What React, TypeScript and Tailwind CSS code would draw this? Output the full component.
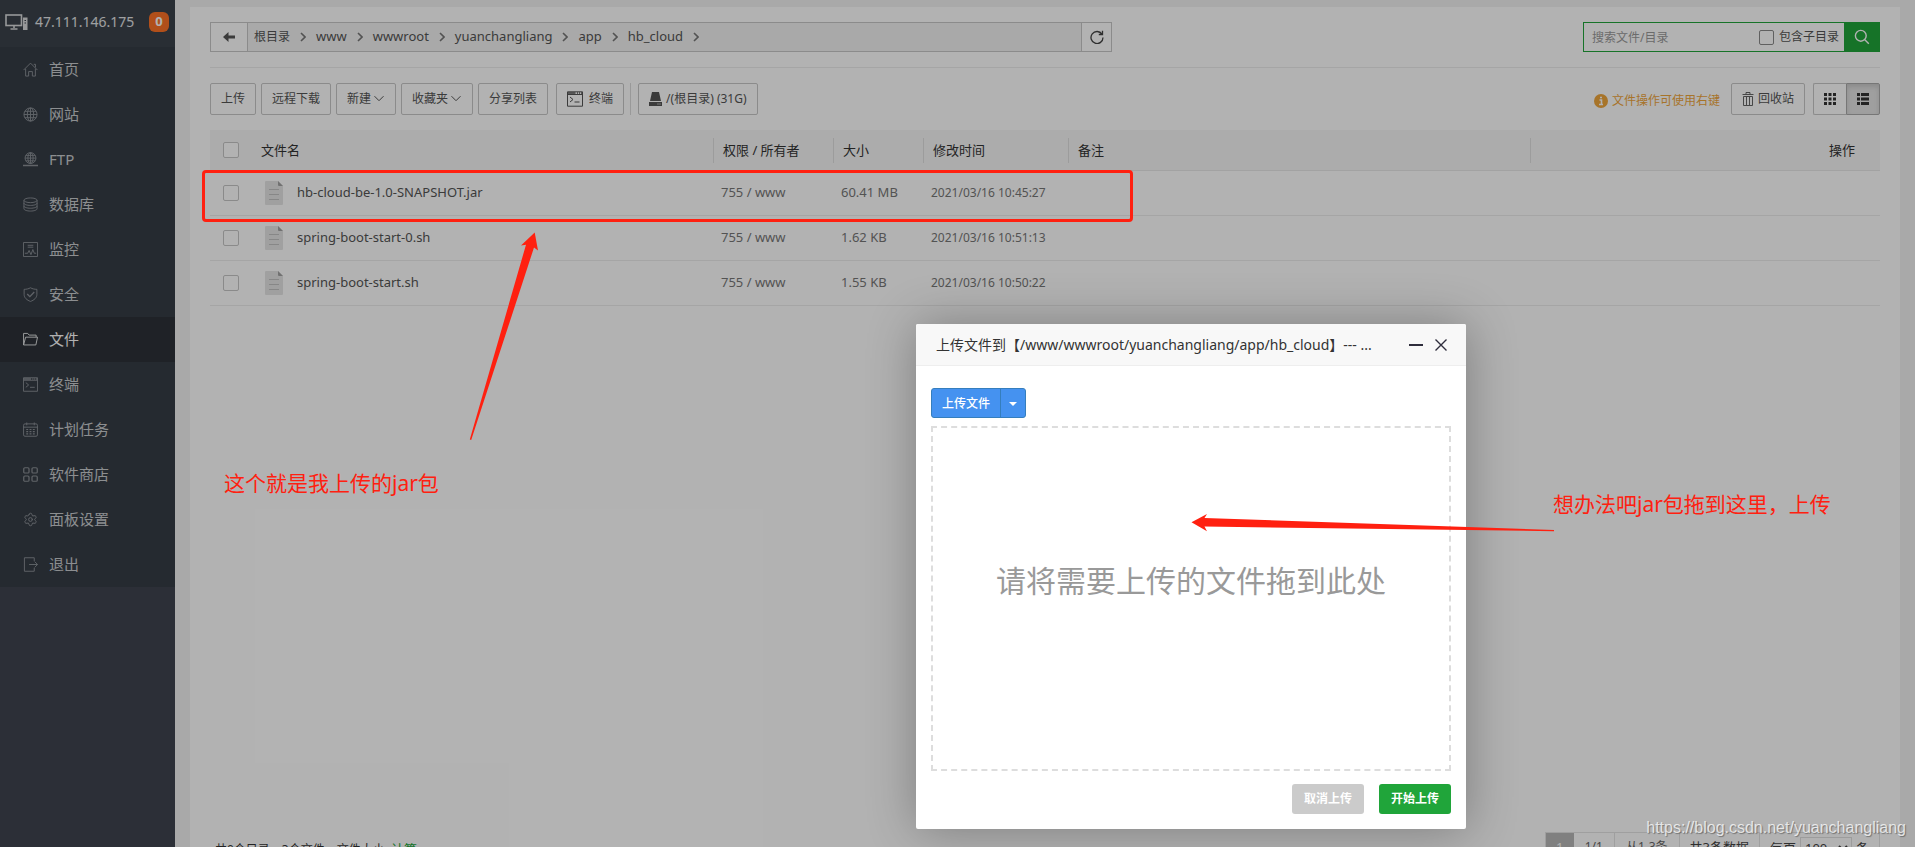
import React from 'react';
import { Settings } from 'lucide-react';

type IconProps = { className?: string };

const svgBase = {
  viewBox: '0 0 16 16',
  fill: 'none',
  stroke: 'currentColor',
  strokeWidth: 1,
  'aria-hidden': true,
} as const;

const HomeIcon = ({ className }: IconProps) => (
  <svg {...svgBase} className={className}>
    <path d="M.6 8.6 8 1.2l7.400 7.400M11.500 2.500h1.800v3.300M2.800 7.200v7.800h3.200v-4.800h4v4.800h3.200V7.200" />
  </svg>
);
const GlobeIcon = ({ className }: IconProps) => (
  <svg {...svgBase} className={className}>
    <circle cx="8" cy="8" r="7" />
    <ellipse cx="8" cy="8" rx="3.400" ry="7" />
    <path d="M8 1v14M1 8h14M2 4.600h12M2 11.400h12" />
  </svg>
);
const FtpIcon = ({ className }: IconProps) => (
  <svg {...svgBase} className={className}>
    <circle cx="8" cy="6.500" r="5.800" />
    <ellipse cx="8" cy="6.500" rx="2.800" ry="5.800" />
    <path d="M8 .7v12M2.200 6.500h11.600M3 3.600h10M3 9.400h10" />
    <path d="M0 14.300h16M6 14.300h4" strokeWidth="1.600" />
  </svg>
);
const DatabaseIcon = ({ className }: IconProps) => (
  <svg {...svgBase} className={className}>
    <ellipse cx="8" cy="3.500" rx="7" ry="2.500" />
    <path d="M1 3.500v9c0 1.400 3.100 2.500 7 2.500s7-1.100 7-2.500v-9M1 6.500C1 7.900 4.100 9 8 9s7-1.100 7-2.500M1 9.500C1 10.900 4.100 12 8 12s7-1.100 7-2.500" />
  </svg>
);
const MonitorIcon = ({ className }: IconProps) => (
  <svg {...svgBase} className={className}>
    <path d="M.5.5h15v15H.5zM5 3.500h6M5 5.500h6M2 12h3l1.500-3 2 4.500 2-5.500 1.500 4h2" />
  </svg>
);
const ShieldIcon = ({ className }: IconProps) => (
  <svg {...svgBase} className={className}>
    <path d="M8 .8C6 2 3.500 2.500 1.200 2.500v5.500c0 3.500 3 6 6.800 7.400 3.800-1.400 6.800-3.900 6.800-7.400V2.500C12.500 2.500 10 2 8 .8z" />
    <path d="m4.500 7.500 2.800 2.800 4.700-5" strokeWidth="1.400" />
  </svg>
);
const FolderIcon = ({ className }: IconProps) => (
  <svg {...svgBase} className={className}>
    <path d="M.6 13.800V1.500h4.400l1.500 1.800h7.500v2.200M.6 13.800 2.800 5.500h12.700l-1.800 8.300z" />
  </svg>
);
const TerminalIcon = ({ className }: IconProps) => (
  <svg {...svgBase} className={className}>
    <path d="M.5.8h15v14.400H.5zM.5 3.500h15" />
    <path d="M.5 2h8M10 2h1M12 2h1M14 2h1" strokeWidth="1.600" />
    <path d="m3 6 3 2.500L3 11M7.500 11h5" />
  </svg>
);
const CalendarIcon = ({ className }: IconProps) => (
  <svg {...svgBase} className={className}>
    <rect x=".6" y="2" width="14.800" height="13.200" rx="1.500" />
    <path d="M.6 5.500h14.800M4 .5v3M12 .5v3" />
    <path d="M3.500 8h2M7 8h2M10.500 8h2M3.500 10.300h2M7 10.300h2M10.500 10.300h2M3.500 12.600h2M7 12.600h2M10.500 12.600h2" strokeWidth="1.200" />
  </svg>
);
const AppsIcon = ({ className }: IconProps) => (
  <svg {...svgBase} className={className} strokeWidth={1.3}>
    <rect x=".8" y=".8" width="5.600" height="5.600" rx="1.200" />
    <rect x="9.600" y=".8" width="5.600" height="5.600" rx="1.200" />
    <rect x=".8" y="9.600" width="5.600" height="5.600" rx="1.200" />
    <rect x="9.600" y="9.600" width="5.600" height="5.600" rx="1.200" />
  </svg>
);
const GearIcon = ({ className }: IconProps) => (
  <Settings className={className} strokeWidth={1.6} aria-hidden="true" />
);
const ExitIcon = ({ className }: IconProps) => (
  <svg {...svgBase} className={className}>
    <path d="M12 4.500V.8H1.500v14.400H12v-3.700M6.500 8h9M12.500 5l3 3-3 3" />
  </svg>
);
const HostIcon = ({ className }: IconProps) => (
  <svg viewBox="0 0 23 16" fill="none" stroke="currentColor" className={className} aria-hidden="true">
    <rect x="1" y="1" width="15.500" height="10.500" strokeWidth="1.600" />
    <path d="M5.500 15h7M9 12v2" strokeWidth="1.600" />
    <path d="M18 3.500h4.500V16H18z" fill="currentColor" stroke="none" />
    <path d="M19.500 6.500h1.500M19.500 9h1.500" stroke="#3a4049" />
  </svg>
);
const ChevronDown = () => (
  <svg viewBox="0 0 12 12" className="h-3 w-3" fill="none" stroke="currentColor" aria-hidden="true">
    <path d="m1.500 3.200 4.500 4.500 4.500-4.500" />
  </svg>
);
const FileIcon = () => (
  <svg viewBox="0 0 18 24" className="h-6 w-[18px]" aria-hidden="true">
    <path d="M1 0h12l5 5v18a1 1 0 0 1-1 1H1a1 1 0 0 1-1-1V1a1 1 0 0 1 1-1z" fill="#e6e6e6" />
    <path d="M13 0v4a1 1 0 0 0 1 1h4z" fill="#a3a3a3" />
    <path d="M4 8.500h10M4 13.500h10M4 18.500h10" stroke="#c2c2c2" />
  </svg>
);

const menu = [
  { label: '首页', Icon: HomeIcon },
  { label: '网站', Icon: GlobeIcon },
  { label: 'FTP', Icon: FtpIcon },
  { label: '数据库', Icon: DatabaseIcon },
  { label: '监控', Icon: MonitorIcon },
  { label: '安全', Icon: ShieldIcon },
  { label: '文件', Icon: FolderIcon, active: true },
  { label: '终端', Icon: TerminalIcon },
  { label: '计划任务', Icon: CalendarIcon },
  { label: '软件商店', Icon: AppsIcon },
  { label: '面板设置', Icon: GearIcon },
  { label: '退出', Icon: ExitIcon },
];

const crumbs = ['根目录', 'www', 'wwwroot', 'yuanchangliang', 'app', 'hb_cloud'];

const files = [
  { name: 'hb-cloud-be-1.0-SNAPSHOT.jar', owner: '755 / www', size: '60.41 MB', time: '2021/03/16 10:45:27' },
  { name: 'spring-boot-start-0.sh', owner: '755 / www', size: '1.62 KB', time: '2021/03/16 10:51:13' },
  { name: 'spring-boot-start.sh', owner: '755 / www', size: '1.55 KB', time: '2021/03/16 10:50:22' },
];

const headings = ['权限 / 所有者', '大小', '修改时间', '备注'];

const toolButton =
  'flex h-8 items-center gap-0.5 rounded-[2px] border border-[#c8c8c8] bg-white px-2.5 text-xs text-[#555] whitespace-nowrap';
const tick = 'block h-4 w-4 appearance-none rounded-[2px] border border-[#c6c6c6] bg-white';

function Sidebar() {
  return (
    <aside className="w-[175px] shrink-0 bg-[#3f444f]">
      <div className="flex h-[47px] items-center bg-[#3c434b] pl-[5px] pb-2.5 pt-1.5 text-[14px] text-[#e3e5e7]">
        <HostIcon className="h-4 w-[23px] text-[#d8dadc]" />
        <span className="w-[102px] pl-[7px]">47.111.146.175</span>
        <span className="ml-auto mr-1.5 flex h-5 w-5 items-center justify-center rounded-md bg-[#fe7226] text-[13px] font-bold text-white">
          0
        </span>
      </div>
      <nav className="bg-[#363d46]">
        {menu.map(({ label, Icon, active }) => (
          <a
            key={label}
            href="#"
            className={
              active
                ? 'flex h-[45px] items-center gap-[11px] bg-[#2d3238] pl-[23px] text-[15px] text-white'
                : 'flex h-[45px] items-center gap-[11px] pl-[23px] text-[15px] text-[#c9cccf]'
            }
          >
            <Icon className={active ? 'h-[15px] w-[15px] text-[#e4e6e8]' : 'h-[15px] w-[15px] text-[#8b9096]'} />
            {label}
          </a>
        ))}
      </nav>
    </aside>
  );
}

function PathBar() {
  return (
    <div className="flex justify-between border-b border-[#ececec] pb-[15px]">
      <div className="flex h-[30px] w-[902px] items-stretch border border-[#c8c8c8] bg-[#f2f2f2]">
        <button aria-label="返回" className="flex w-[37px] items-center justify-center border-r border-[#c8c8c8] bg-white text-[#555]">
          <svg viewBox="0 0 12 10" className="h-2.5 w-3" fill="currentColor" aria-hidden="true">
            <path d="M0 5 5.500 0v3.500H12v3H5.500V10z" />
          </svg>
        </button>
        <nav className="flex flex-1 items-center pl-1.5 text-[13px] text-[#555]">
          {crumbs.map((c, i) => (
            <span key={c} className="flex items-center">
              <a href="#" className={i === 0 ? 'text-xs' : 'text-[13px]'}>
                {c}
              </a>
              <svg viewBox="0 0 6 10" className="mx-2.5 h-2.5 w-1.5" fill="none" stroke="#777" strokeWidth="1.600" aria-hidden="true">
                <path d="m1 1 4 4-4 4" />
              </svg>
            </span>
          ))}
        </nav>
        <button aria-label="刷新" className="flex w-[30px] items-center justify-center border-l border-[#c8c8c8] bg-white text-[#444]">
          <svg viewBox="0 0 14 14" className="h-[14px] w-[14px]" fill="none" stroke="currentColor" strokeWidth="1.300" aria-hidden="true">
            <path d="M12 4.200A6 6 0 1 0 13 7.500M12.500.8v3.700H8.800" />
          </svg>
        </button>
      </div>
      <div className="flex h-[30px] w-[297px] items-center border border-[#20a53a] bg-white">
        <input
          aria-label="搜索文件/目录"
          placeholder="搜索文件/目录"
          className="h-full min-w-0 flex-1 bg-transparent pl-2 text-xs outline-none placeholder:text-[#9a9a9a]"
        />
        <label className="flex items-center gap-[5px] pr-[5px] text-xs text-[#555]">
          <input type="checkbox" className="h-[15px] w-[15px] appearance-none rounded-[2px] border border-[#8a8a8a] bg-white" />
          包含子目录
        </label>
        <button aria-label="搜索" className="flex h-full w-[35px] items-center justify-center bg-[#20a53a] text-white">
          <svg viewBox="0 0 16 16" className="h-4 w-4" fill="none" stroke="currentColor" strokeWidth="1.400" aria-hidden="true">
            <circle cx="6.800" cy="6.800" r="5.400" />
            <path d="m10.800 10.800 4 4" />
          </svg>
        </button>
      </div>
    </div>
  );
}

function Toolbar() {
  return (
    <div className="flex items-center justify-between py-[15px]">
      <div className="flex items-center gap-[5px]">
        <button className={toolButton}>上传</button>
        <button className={toolButton}>远程下载</button>
        <button className={toolButton}>
          新建
          <ChevronDown />
        </button>
        <button className={toolButton}>
          收藏夹
          <ChevronDown />
        </button>
        <button className={toolButton}>分享列表</button>
        <div className="ml-[3px] flex items-center border-r border-[#dcdcdc] pr-1.5">
          <button className={toolButton}>
            <TerminalIcon className="mr-1 h-4 w-4" />
            终端
          </button>
        </div>
        <button className={toolButton + ' ml-0.5'}>
          <svg viewBox="0 0 13 14" className="mr-0.5 h-3.5 w-[13px]" fill="currentColor" aria-hidden="true">
            <path d="M3 0h7l2 9H1zM0 10h13v4H0z" />
            <path d="M8.500 12h1M10.500 12h1" stroke="#fff" />
          </svg>
          /(根目录) (31G)
        </button>
      </div>
      <div className="flex items-center">
        <span className="mr-[11px] flex items-center gap-1 pt-1 text-xs text-[#f0a63c]">
          <svg viewBox="0 0 14 14" className="h-3.5 w-3.5" aria-hidden="true">
            <circle cx="7" cy="7" r="7" fill="#f0a63c" />
            <path d="M5.500 6h2v4M5 10.500h4M6 3.500h2" stroke="#fff" strokeWidth="1.600" fill="none" />
          </svg>
          文件操作可使用右键
        </span>
        <button className={toolButton + ' mr-2'}>
          <svg viewBox="0 0 12 14" className="mr-0.5 h-3.5 w-3" fill="none" stroke="currentColor" strokeWidth="0.900" aria-hidden="true">
            <path d="M.5 2.500h11M4 2V.5h4V2M1.500 4.500v9h9v-9zM4.500 5v8M7.500 5v8" />
          </svg>
          回收站
        </button>
        <button aria-label="图标视图" className="flex h-8 w-[33px] items-center justify-center rounded-l-[2px] border border-r-0 border-[#c8c8c8] text-[#333]">
          <svg viewBox="0 0 12 12" className="h-3 w-3" fill="currentColor" aria-hidden="true">
            <path d="M0 0h3v3H0zM4.500 0h3v3h-3zM9 0h3v3H9zM0 4.500h3v3H0zM4.500 4.500h3v3h-3zM9 4.500h3v3H9zM0 9h3v3H0zM4.500 9h3v3h-3zM9 9h3v3H9z" />
          </svg>
        </button>
        <button aria-label="列表视图" className="flex h-8 w-[34px] items-center justify-center rounded-r-[2px] border border-[#aaa] bg-[#e4e4e4] text-[#333] shadow-[inset_0_3px_5px_rgba(0,0,0,0.125)]">
          <svg viewBox="0 0 12 12" className="h-3 w-3" fill="currentColor" aria-hidden="true">
            <path d="M0 0h3v3H0zM4 0h8v3H4zM0 4.500h3v3H0zM4 4.500h8v3H4zM0 9h3v3H0zM4 9h8v3H4z" />
          </svg>
        </button>
      </div>
    </div>
  );
}

function FileTable() {
  return (
    <table className="w-full table-fixed text-left">
      <colgroup>
        <col className="w-10" />
        <col className="w-[463px]" />
        <col className="w-[120px]" />
        <col className="w-[90px]" />
        <col className="w-[145px]" />
        <col />
        <col className="w-[350px]" />
      </colgroup>
      <thead className="bg-[#f6f6f6] text-[13px] leading-[25px] text-[#333]">
        <tr className="h-10 border-b border-[#e8e8e8]">
          <th className="pl-[13px] font-normal">
            <input type="checkbox" aria-label="全选" className={tick} />
          </th>
          <th className="pl-[11px] pt-0.5 font-normal">文件名</th>
          {headings.map((h) => (
            <th key={h} className="pt-0.5 font-normal">
              <div className="border-l border-[#e0e0e0] pl-[9px]">{h}</div>
            </th>
          ))}
          <th className="pt-0.5 text-right font-normal">
            <div className="border-l border-[#e0e0e0] pr-[25px]">操作</div>
          </th>
        </tr>
      </thead>
      <tbody className="text-[13px] text-[#777]">
        {files.map((f) => (
          <tr key={f.name} className="h-[45px] border-b border-[#ececec]">
            <td className="pl-[13px]">
              <input type="checkbox" aria-label={f.name} className={tick} />
            </td>
            <td className="pl-[15px] text-[#555]">
              <a href="#" className="flex items-center gap-[14px]">
                <FileIcon />
                {f.name}
              </a>
            </td>
            <td className="pl-2">{f.owner}</td>
            <td className="pl-2">{f.size}</td>
            <td className="pl-2 text-xs">{f.time}</td>
            <td />
            <td />
          </tr>
        ))}
      </tbody>
    </table>
  );
}

function Footer() {
  return (
    <footer className="mt-auto flex items-start justify-between">
      <p className="pl-[5px] pt-[7px] text-xs leading-5 text-[#333]">
        共0个目录，3个文件，文件大小:{' '}
        <a href="#" className="text-[13px] text-[#20a53a]">
          计算
        </a>
      </p>
      <div className="flex h-8 border border-[#e4e4e4] text-[13px] leading-[28px] text-[#444]">
        <span className="w-7 bg-[#b8b8b8] text-center text-white">1</span>
        <span className="border-r border-[#e4e4e4] px-[11px] text-xs leading-[28px] text-[#666]">1/1</span>
        <span className="border-r border-[#e4e4e4] px-[11px] text-xs leading-[28px] text-[#666]">从1-3条</span>
        <span className="border-r border-[#e4e4e4] px-2.5">共3条数据</span>
        <label className="flex items-center gap-1 px-2.5">
          每页
          <select className="h-[22px] w-[52px] border border-[#e0e0e0] bg-white text-[13px] leading-5" defaultValue="100">
            <option>100</option>
            <option>200</option>
          </select>
          条
        </label>
      </div>
    </footer>
  );
}

function UploadDialog() {
  return (
    <section
      role="dialog"
      aria-labelledby="upload-title"
      className="absolute left-[916px] top-[324px] w-[550px] rounded-[2px] bg-white shadow-[1px_1px_50px_rgba(0,0,0,0.3)]"
    >
      <header className="flex h-[42px] items-center rounded-t-[2px] border-b border-[#eee] bg-[#f8f8f8] pl-5 pr-[19px]">
        <h2 id="upload-title" className="min-w-0 flex-1 whitespace-nowrap text-[14px] text-[#333]">
          上传文件到【/www/wwwroot/yuanchangliang/app/hb_cloud】--- ...
        </h2>
        <button aria-label="最小化" className="flex h-4 w-[14px] items-center">
          <span className="h-0.5 w-full bg-[#2e2d3c]" />
        </button>
        <button aria-label="关闭" className="ml-3 text-[#2e2d3c]">
          <svg viewBox="0 0 12 12" className="h-3 w-3" stroke="currentColor" strokeWidth="1.400" aria-hidden="true">
            <path d="m.5.5 11 11M11.500.5l-11 11" />
          </svg>
        </button>
      </header>
      <div className="px-[15px] pb-[15px] pt-[22px]">
        <div className="flex h-[30px] w-[95px] overflow-hidden rounded-[3px] border border-[#357ebd] bg-[#4592f0] text-xs font-medium text-white">
          <button className="flex-1 pt-0.5">上传文件</button>
          <button aria-label="更多" className="flex w-[25px] items-center justify-center border-l border-[#357ebd] pt-0.5">
            <svg viewBox="0 0 8 4" className="h-1 w-2" fill="currentColor" aria-hidden="true">
              <path d="M0 0h8L4 4z" />
            </svg>
          </button>
        </div>
        <div className="mt-2 flex h-[345px] items-center justify-center border-2 border-dashed border-[#ddd] pb-9 text-[30px] text-[#999]">
          请将需要上传的文件拖到此处
        </div>
        <div className="mt-[13px] flex justify-end gap-[15px] text-xs font-bold text-white">
          <button className="h-[30px] w-[72px] rounded-[3px] bg-[#cbcbcb]">取消上传</button>
          <button className="h-[30px] w-[72px] rounded-[3px] bg-[#20a53a]">开始上传</button>
        </div>
      </div>
    </section>
  );
}

function Annotations() {
  return (
    <div className="pointer-events-none absolute inset-0 text-[21px] leading-[30px] text-[#ff2010]">
      <div className="absolute left-[202px] top-[170px] h-[52px] w-[931px] rounded-[4px] border-3 border-[#ff2010]" />
      <svg viewBox="0 0 1915 847" className="absolute left-0 top-0 h-[847px] w-[1915px]" fill="#ff2010" aria-hidden="true">
        <path d="M534.700 232.500 521 245.500l5-.8L469.800 439.500l1.400.6L534 247.500l4 3z" />
        <path d="M1191.500 522.300 1207 514l-2.500 4 349.500 12v1.200l-349.500-4.700 2.500 4.700z" />
      </svg>
      <p className="absolute left-[224px] top-[468px] whitespace-nowrap">这个就是我上传的jar包</p>
      <p className="absolute left-[1553px] top-[489px] whitespace-nowrap">想办法吧jar包拖到这里，上传</p>
      <p className="absolute bottom-[9px] right-[9px] font-['Liberation_Sans',sans-serif] text-[16px] leading-5 text-white/75 [text-shadow:1px_1px_1px_rgba(0,0,0,0.35)]">
        https://blog.csdn.net/yuanchangliang
      </p>
    </div>
  );
}

export default function App() {
  return (
    <div className="relative h-screen overflow-hidden bg-[#f2f2f2] font-['Noto_Sans','Noto_Sans_CJK_SC',sans-serif]">
      <div className="flex min-h-[calc(100vh+32px)]">
        <Sidebar />
        <main className="flex min-w-0 flex-1 px-[15px] pt-[7px]">
          <div className="flex min-w-0 flex-1 flex-col bg-white px-5 pb-[15px] pt-[15px]">
            <PathBar />
            <Toolbar />
            <FileTable />
            <Footer />
          </div>
        </main>
      </div>
      <div className="absolute inset-0 bg-black/30" />
      <UploadDialog />
      <Annotations />
    </div>
  );
}
